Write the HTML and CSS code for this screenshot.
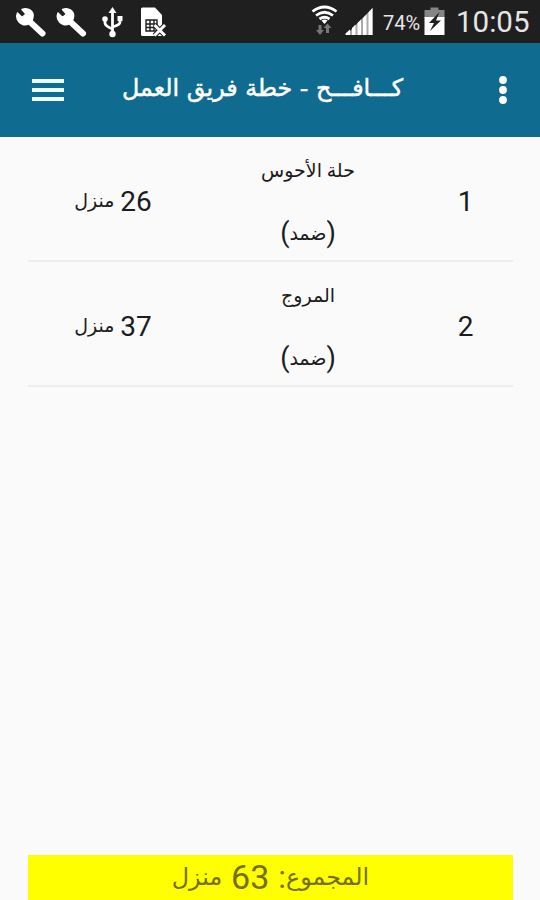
FILE: index.html
```html
<!DOCTYPE html>
<html lang="ar" dir="rtl">
<head>
    <meta charset="UTF-8">
    <meta name="viewport" content="width=device-width, initial-scale=1.0">
    <title>كافح - خطة فريق العمل</title>
    <link rel="stylesheet" href="styles.css">
</head>
<body>

    <div class="status-bar" dir="ltr">
        <svg class="notifications" width="180" height="43" viewBox="0 0 180 43">
            <g fill="none" stroke="#fff">
                <g id="wrench">
                    <path d="M28 20L42.500 33.500" stroke-width="6" stroke-linecap="round"/>
                    <path d="M17.500 13L22 17.500L26 14L22 9.500C28 7 34 11 33 17C32 24 26 26 22 24C17.500 22 15.500 17 17.500 13Z" fill="#fff" stroke="#fff" stroke-width="1.500" stroke-linejoin="round"/>
                </g>
                <use href="#wrench" x="40.500"/>
                <path d="M112.500 12V33M105 19V23Q105 26 112.500 29M120 18V22Q120 25 112.500 27" stroke-width="2.800"/>
            </g>
            <g fill="#fff">
                <path d="M112.500 7L116.500 13H108.500Z"/>
                <circle cx="105" cy="19" r="2.800"/>
                <path d="M117.500 16H122.500V21H117.500Z"/>
                <circle cx="112.500" cy="34" r="3.200"/>
                <path d="M141 9Q141 7.500 142.500 7.500H155L162 15V36H142.500Q141 36 141 34.500Z"/>
            </g>
            <path d="M146 20H157V31H146ZM146 24H157M146 27.500H157M150 20V31M154 20V31" fill="none" stroke="#1f1f1f" stroke-width="1.400"/>
            <path d="M154.500 25L165 35.500M165 25L154.500 35.500" stroke="#1f1f1f" stroke-width="5"/>
            <path d="M154.500 25L165 35.500M165 25L154.500 35.500" stroke="#fff" stroke-width="3"/>
        </svg>
        <svg class="signals" width="76" height="43" viewBox="0 0 76 43">
            <g fill="none" stroke="#fff" stroke-width="2.800">
                <path d="M2.500 11.500Q14.500 2.500 26.500 11.500"/>
                <path d="M6 15.500Q14.500 9 23 15.500"/>
                <path d="M9.500 19Q14.500 15.500 19.500 19"/>
            </g>
            <path d="M11.500 20.500Q14.500 18.500 17.500 20.500L14.500 24Z" fill="#fff"/>
            <path d="M8.500 25H11.500V30H14L10 35L6 30H8.500ZM16 33H19V28H21.500L17.500 23.500L13.500 28H16Z" fill="#777"/>
            <path d="M36 35L62.500 8V35Z" fill="#aaa"/>
            <path d="M35.500 35V33.500L40 29.500V35ZM42 35V28L45.500 24.500V35ZM47.500 35V23L51 19.500V35ZM53 35V18L56.500 14.500V35ZM58.500 35V12.500L62.500 8V35Z" fill="#fff"/>
        </svg>
        <span class="battery-level">74%</span>
        <svg class="battery" width="22" height="43" viewBox="0 0 22 43">
            <path d="M0.500 10H6.500V7.500H14.500V10H20.500V18H0.500Z" fill="#858585"/>
            <path d="M0.500 17H20.500V35H0.500Z" fill="#fff"/>
            <path d="M15.500 12L5 23H10L6 31L17 20.500H12Z" fill="#1f1f1f"/>
        </svg>
        <span class="clock">10:05</span>
    </div>

    <header>
        <svg class="more" width="10" height="30" viewBox="0 0 10 30" fill="#fff">
            <circle cx="5" cy="5" r="3.900"/>
            <circle cx="5" cy="15" r="3.900"/>
            <circle cx="5" cy="25" r="3.900"/>
        </svg>
        <h1>كـــافـــح - خطة فريق العمل</h1>
        <button class="menu" aria-label="القائمة"><span></span><span></span><span></span></button>
    </header>

    <main>
        <div class="row">
            <div class="index">1</div>
            <div class="place">
                <p>حلة الأحوس</p>
                <p><span class="paren">(</span>ضمد<span class="paren">)</span></p>
            </div>
            <div class="count"><span class="number">26</span> منزل</div>
        </div>
        <div class="row">
            <div class="index">2</div>
            <div class="place">
                <p>المروج</p>
                <p><span class="paren">(</span>ضمد<span class="paren">)</span></p>
            </div>
            <div class="count"><span class="number">37</span> منزل</div>
        </div>
    </main>

    <footer>المجموع<span class="colon">:</span> <span class="number">63</span> منزل</footer>

</body>
</html>
```
FILE: styles.css
```css
body {
    font-family: Roboto, "DejaVu Sans", sans-serif;
    margin: 0;
    height: 900px;
    display: flex;
    flex-direction: column;
    background-color: #fafafa;
    color: #1c1c1c;
    overflow: hidden;
}

.status-bar {
    display: flex;
    height: 43px;
    background-color: #1f1f1f;
    color: #e6e6e6;
    line-height: 44px;
}

.signals {
    margin-left: 130px;
}

.battery-level {
    width: 39px;
    margin: 1px 0 0 -3px;
    font-size: 20px;
    white-space: nowrap;
}

.battery {
    margin-left: 2px;
}

.clock {
    margin-left: 10px;
    font-size: 29.5px;
}

header {
    display: flex;
    align-items: center;
    box-sizing: border-box;
    height: 94px;
    padding: 0 32px;
    background-color: #106b91;
    color: white;
}

h1 {
    margin: 0 0 4px 58px;
    font-family: "DejaVu Sans", sans-serif;
    font-size: 23.8px;
    font-weight: normal;
    white-space: nowrap;
    -webkit-text-stroke: 0.5px white;
}

.more {
    margin-left: auto;
}

.menu {
    display: flex;
    flex-direction: column;
    gap: 5px;
    padding: 0;
    border: none;
    background: none;
}

.menu span {
    width: 32px;
    height: 4px;
    background-color: #eefaff;
}

main {
    flex: 1;
    padding: 0 27px 0 28px;
}

.row {
    display: grid;
    grid-template-columns: 95px 220px 170px;
    align-items: center;
    box-sizing: border-box;
    height: 125px;
    padding-top: 2px;
    border-bottom: 2px solid #ededed;
    text-align: center;
    font-size: 19px;
}

.place p {
    margin: 0;
    height: 62px;
    line-height: 64px;
}

.index,
.number {
    font-size: 28px;
}

.number {
    margin-left: 1px;
    vertical-align: -4px;
}

.paren {
    font-size: 27px;
    vertical-align: -2px;
}

footer {
    height: 45px;
    margin: 0 27px 0 28px;
    background-color: #ffff00;
    color: #73700a;
    font-size: 23.8px;
    line-height: 45px;
    text-align: center;
}

footer .number {
    margin: 0 3px;
    font-size: 34px;
}

.colon {
    font-size: 32px;
    vertical-align: -3px;
}
```
